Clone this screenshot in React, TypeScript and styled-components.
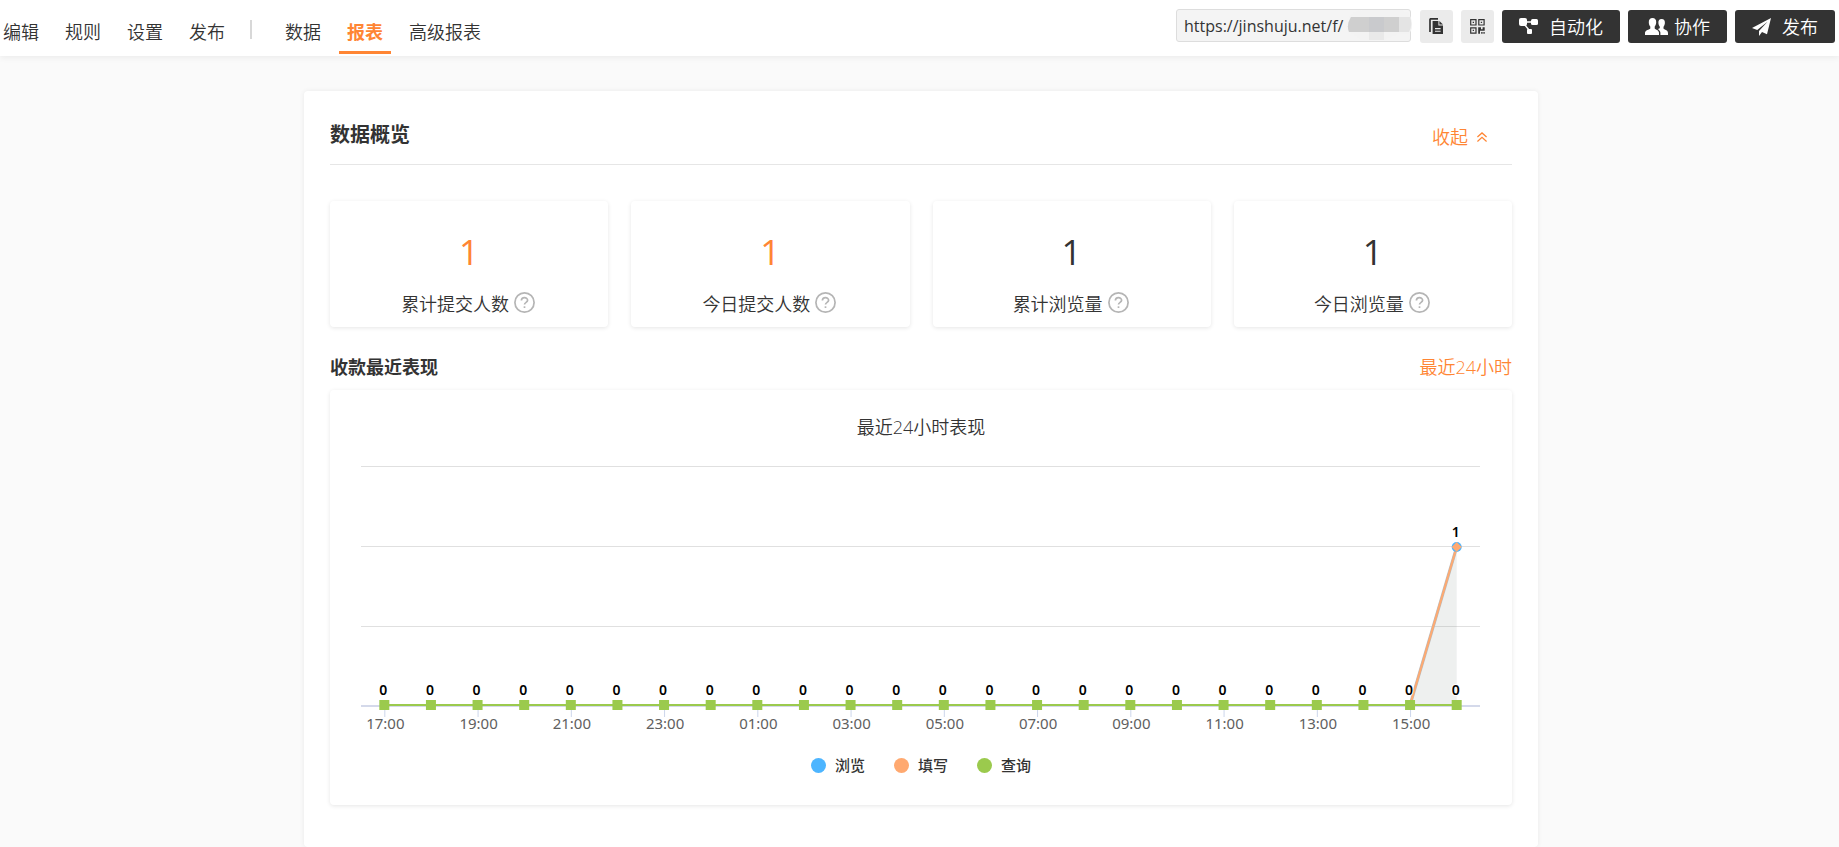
import React from "react";
import styled, { createGlobalStyle } from "styled-components";

const ORANGE = "#ff8533";
const CJK = `"Open Sans", "Noto Sans CJK SC", sans-serif`;

const GlobalStyle = createGlobalStyle`
  * { box-sizing: border-box; }
  body {
    margin: 0;
    background: #fafafa;
    color: #333;
    font-family: ${CJK};
    font-size: 18px;
    font-weight: 350;
    line-height: 24px;
  }
  #root { min-height: 100vh; display: flex; flex-direction: column; }
  button, input { font: inherit; color: inherit; }
  h1, h2, h3, p, ul { margin: 0; padding: 0; }
`;

const Header = styled.header`
  display: flex;
  justify-content: space-between;
  height: 56px;
  padding: 0 4px 0 3px;
  background: #fff;
  box-shadow: 0 2px 6px rgba(0, 0, 0, 0.06);
`;

const Nav = styled.nav`
  display: flex;
  gap: 10px;
  margin-left: -8px;
  padding-top: 12px;
`;

const NavLink = styled.a<{ $active?: boolean }>`
  height: 42px;
  padding: 8px 8px 0;
  color: ${(p) => (p.$active ? ORANGE : "#333")};
  font-weight: ${(p) => (p.$active ? 700 : 350)};
  border-bottom: 3px solid ${(p) => (p.$active ? ORANGE : "transparent")};
  text-decoration: none;
  white-space: nowrap;
`;

const Divider = styled.span`
  width: 2px;
  height: 19px;
  margin: 8px 15px 0 7px;
  background: #d8d8d8;
`;

const Tools = styled.div`
  display: flex;
  align-items: flex-start;
  gap: 8px;
  padding-top: 10px;
`;

const UrlBox = styled.div`
  position: relative;
  width: 235px;
  margin: -1px 1px 0 0;
`;

const UrlInput = styled.input`
  display: block;
  width: 100%;
  height: 33px;
  padding: 0 7px;
  border: 1px solid #ddd;
  border-radius: 3px;
  background: #f4f4f4;
  font-size: 16px;
  font-weight: 400;
`;

const Mask = styled.svg`
  position: absolute;
  top: 0;
  right: -2px;
`;

const IconButton = styled.button`
  display: flex;
  align-items: center;
  justify-content: center;
  width: 33px;
  height: 33px;
  padding: 0;
  border: 0;
  border-radius: 3px;
  background: #ebebeb;
`;

const DarkButton = styled.button<{ $gap: number }>`
  display: flex;
  align-items: center;
  gap: ${(p) => p.$gap}px;
  height: 33px;
  padding: 0 17px;
  border: 0;
  border-radius: 3px;
  background: #333;
  color: #fff;
  white-space: nowrap;
`;

const Main = styled.main`
  flex: 1;
  display: flex;
  justify-content: center;
  padding: 35px 0 0 3px;
`;

const Panel = styled.section`
  width: 100%;
  max-width: 1234px;
  padding: 0 26px 42px;
  border-radius: 4px;
  background: #fff;
  box-shadow: 0 0 5px rgba(0, 0, 0, 0.07);
`;

const PanelHead = styled.div`
  display: flex;
  justify-content: space-between;
  align-items: center;
  height: 74px;
  padding-top: 14px;
  border-bottom: 1px solid #e6e6e6;
`;

const PanelTitle = styled.h1`
  font-size: 20px;
  font-weight: 700;
`;

const TextButton = styled.button`
  display: flex;
  align-items: center;
  gap: 9px;
  padding: 0;
  border: 0;
  background: none;
  color: ${ORANGE};
`;

const Collapse = styled(TextButton)`
  margin-right: 25px;
  padding-top: 4px;
`;

const Cards = styled.div`
  display: grid;
  grid-template-columns: repeat(4, 1fr);
  gap: 23px;
  margin-top: 36px;
`;

const Card = styled.div`
  display: flex;
  flex-direction: column;
  align-items: center;
  height: 126px;
  padding-top: 31px;
  border-radius: 4px;
  background: #fff;
  box-shadow: 0 1px 4px rgba(0, 0, 0, 0.1);
`;

const CardValue = styled.strong<{ $accent?: boolean }>`
  color: ${(p) => (p.$accent ? ORANGE : "#333")};
  font-size: 35px;
  font-weight: 400;
  line-height: 40px;
`;

const CardLabel = styled.p`
  display: flex;
  align-items: flex-start;
  gap: 5px;
  margin-top: 20px;
  padding-right: 2px;
  white-space: nowrap;
`;

const SectionHead = styled.div`
  display: flex;
  justify-content: space-between;
  align-items: center;
  height: 63px;
  padding-top: 17px;
`;

const SectionTitle = styled.h2`
  font-size: 18px;
  font-weight: 700;
`;

const ChartBox = styled.div`
  padding: 25px 0 28px;
  border-radius: 4px;
  background: #fff;
  box-shadow: 0 1px 4px rgba(0, 0, 0, 0.1);
`;

const ChartTitle = styled.h3`
  font-size: 18px;
  font-weight: 350;
  text-align: center;
`;

const Plot = styled.svg`
  display: block;
  width: 100%;
  height: auto;
`;

const DataLabel = styled.text`
  fill: #000;
  stroke: #fff;
  stroke-width: 2px;
  paint-order: stroke;
  font: 600 14px "Noto Sans", sans-serif;
  text-anchor: middle;
`;

const AxisLabel = styled.text`
  fill: #606060;
  font: 400 15px "Noto Sans", sans-serif;
  text-anchor: middle;
`;

const Legend = styled.div`
  display: flex;
  justify-content: center;
  gap: 29px;
`;

const LegendItem = styled.button`
  display: flex;
  align-items: center;
  gap: 9px;
  padding: 0;
  border: 0;
  background: none;
  font-size: 15px;
  font-weight: 500;
  line-height: 24px;
`;

const Dot = styled.i<{ $color: string }>`
  width: 15px;
  height: 15px;
  border-radius: 50%;
  background: ${(p) => p.$color};
`;

const UrlMask = () => (
  <Mask width="66" height="33" viewBox="0 0 66 33" aria-hidden="true">
    <path d="M2 8Q8 0 18 1H54Q65 3 65 16Q65 24 60 25H52L37 31H15L4 24Z" fill="#f3f3f3" />
    <path d="M4 8H63Q66 16 62 23H2Q-1 16 4 8Z" fill="#e4e4e4" />
    <path d="M4 8H52V23H2Q-1 16 4 8Z" fill="#cfcfcf" />
    <path d="M22 8H37V23H22Z" fill="#c9cacd" />
    <path d="M22 23H37V31H22Z" fill="#e9e9e9" />
  </Mask>
);

const CopyIcon = () => (
  <svg width="15" height="17" viewBox="0 0 15 17">
    <path d="M1 14V1.6Q1 .8 1.8 .8H9" fill="none" stroke="#333" strokeWidth="1.7" />
    <path d="M3.6 3H9.4V7.6H14V16H3.6Z" fill="#333" />
    <path d="M10.4 3L14 6.6H10.4Z" fill="#333" />
    <path d="M6 10.6H11.6M6 13.2H11.6" stroke="#ebebeb" strokeWidth="1.1" />
  </svg>
);

const QrIcon = () => (
  <svg width="15" height="15" viewBox="0 0 15 15" fill="none" stroke="#333" strokeWidth="1.2">
    <path d="M.7 .7H6V6H.7ZM8.8 .7H14.1V6H8.8ZM.7 8.8H6V14.1H.7Z" />
    <path d="M2.7 2.7H4V4H2.7ZM10.8 2.7H12.1V4H10.8ZM2.7 10.8H4V12.1H2.7ZM8.2 8.2H11V10.2H12.6V8.2H14.7V11.8H10V14.7H8.2ZM11.2 13H12.6V14.7H11.2ZM13.4 13H14.7V14.7H13.4Z" fill="#333" stroke="none" />
  </svg>
);

const FlowIcon = () => (
  <svg width="19" height="17" viewBox="0 0 19 17" fill="#fff">
    <rect x="0" y="0" width="8" height="8" rx="2" />
    <rect x="12" y="1" width="7" height="6" rx="1.5" />
    <rect x="8" y="11" width="5" height="5" rx="1" />
    <path d="M6 4H13M5 6L10 12" stroke="#fff" strokeWidth="1.4" />
  </svg>
);

const PeopleIcon = () => (
  <svg width="23" height="17" viewBox="0 0 23 17" fill="#fff">
    <path d="M7.500 0C10 0 11.400 1.800 11.200 4.400C11.100 6.600 10.200 7.600 9.700 8.500V10.400C10.500 11.600 14 12 14 14.800V17H0V14.800C0 12 4.600 11.600 5.300 10.400V8.500C4.600 7.600 3.900 6.600 3.800 4.400C3.700 1.800 5 0 7.500 0Z" />
    <path d="M16.600 1C18.900 1 20 2.600 19.900 5C19.800 7 19 8 18.500 8.800V10.600C19.200 11.800 23 12 23 15V17H15.400V14.600C15.300 12.700 13.800 11.600 12.600 10.900C14.400 10.900 14.900 10.400 14.900 8.800C14.300 8 13.500 7 13.400 5C13.300 2.600 14.300 1 16.600 1Z" />
  </svg>
);

const PlaneIcon = () => (
  <svg width="19" height="18" viewBox="0 0 19 18" fill="#fff">
    <path d="M19 0L0 10L5.200 12L15.500 3.800L7 13V18L10 14L15 16.200Z" />
  </svg>
);

const UpIcon = () => (
  <svg width="10" height="10" viewBox="0 0 10 10" fill="none" stroke="currentColor" strokeWidth="1.3">
    <path d="M.4 5L5 .9L9.600 5M.4 9.400L5 5.300L9.600 9.400" />
  </svg>
);

const HelpIcon = () => (
  <svg width="21" height="21" viewBox="0 0 21 21" fill="none" stroke="#b5b5b5" strokeWidth="1.7">
    <circle cx="10.500" cy="10.500" r="9.600" />
    <path d="M7.400 8.600C7.400 4.800 13.600 4.800 13.600 8.300C13.600 10.400 10.500 10.300 10.500 12.600" />
    <path d="M10.500 14.300V16" />
  </svg>
);

const cards = [
  { label: "累计提交人数", value: 1, accent: true },
  { label: "今日提交人数", value: 1, accent: true },
  { label: "累计浏览量", value: 1 },
  { label: "今日浏览量", value: 1 },
];

const series = [
  { name: "浏览", color: "#4db5ff" },
  { name: "填写", color: "#ffa970" },
  { name: "查询", color: "#9bca4d" },
];

const hours = Array.from({ length: 24 }, (_, i) => (17 + i) % 24);
const LEFT = 31;
const RIGHT = 1150;
const BASE = 266;
const PEAK = 108;
const STEP = (RIGHT - LEFT) / hours.length;
const pointX = (i: number) => LEFT + STEP * (i + 0.5);

const Chart = () => {
  const last = pointX(23);
  const previous = pointX(22);
  return (
    <Plot viewBox="0 0 1182 314" role="img" aria-label="最近24小时表现">
      {[27.5, 107.5, 187.5].map((y) => (
        <path key={y} d={`M${LEFT} ${y}H${RIGHT}`} stroke="#e0e0e0" />
      ))}
      <path d={`M${LEFT} ${BASE + 1}H${RIGHT}`} stroke="#d4d9ea" strokeWidth="2" />
      {hours.map((h, i) =>
        i % 2 === 0 ? (
          <path key={h} d={`M${pointX(i) + 0.5} ${BASE}V${BASE + 12}`} stroke="#ccd6eb" />
        ) : null
      )}
      <path d={`M${previous} ${BASE}L${last} ${PEAK}V${BASE}Z`} fill="#8c9a96" fillOpacity="0.15" />
      <path d={`M${previous} ${BASE}L${last} ${PEAK}`} stroke="#b9b9b9" strokeWidth="3" />
      <path d={`M${previous} ${BASE}L${last} ${PEAK}`} stroke="#ffa970" strokeWidth="2" />
      <path d={`M${pointX(0)} ${BASE}H${last}`} stroke="#9bca4d" strokeWidth="2" />
      <circle cx={last} cy={PEAK} r="5" fill="#4db5ff" />
      <path d={`M${last} ${PEAK - 5}l5 5l-5 5l-5 -5Z`} fill="#ffa970" />
      {hours.map((h, i) => (
        <g key={h}>
          <rect x={pointX(i) - 5} y={BASE - 5} width="10" height="10" fill="#9bca4d" />
          <DataLabel x={pointX(i) - 1} y={BASE - 10}>0</DataLabel>
          {i % 2 === 0 && (
            <AxisLabel x={pointX(i) + 1} y={BASE + 24}>{String(h).padStart(2, "0")}:00</AxisLabel>
          )}
        </g>
      ))}
      <DataLabel x={last - 1} y={PEAK - 10}>1</DataLabel>
    </Plot>
  );
};

export default function App() {
  return (
    <>
      <GlobalStyle />
      <Header>
        <Nav>
          <NavLink href="#edit">编辑</NavLink>
          <NavLink href="#rules">规则</NavLink>
          <NavLink href="#settings">设置</NavLink>
          <NavLink href="#publish">发布</NavLink>
          <Divider />
          <NavLink href="#data">数据</NavLink>
          <NavLink href="#report" $active aria-current="page">报表</NavLink>
          <NavLink href="#advanced">高级报表</NavLink>
        </Nav>
        <Tools>
          <UrlBox>
            <UrlInput aria-label="表单链接" readOnly value="https://jinshuju.net/f/" />
            <UrlMask />
          </UrlBox>
          <IconButton aria-label="复制链接"><CopyIcon /></IconButton>
          <IconButton aria-label="二维码"><QrIcon /></IconButton>
          <DarkButton $gap={11}><FlowIcon />自动化</DarkButton>
          <DarkButton $gap={6}><PeopleIcon />协作</DarkButton>
          <DarkButton $gap={11}><PlaneIcon />发布</DarkButton>
        </Tools>
      </Header>
      <Main>
        <Panel>
          <PanelHead>
            <PanelTitle>数据概览</PanelTitle>
            <Collapse>收起<UpIcon /></Collapse>
          </PanelHead>
          <Cards>
            {cards.map((c) => (
              <Card key={c.label}>
                <CardValue $accent={c.accent}>{c.value}</CardValue>
                <CardLabel>{c.label}<HelpIcon /></CardLabel>
              </Card>
            ))}
          </Cards>
          <SectionHead>
            <SectionTitle>收款最近表现</SectionTitle>
            <TextButton>最近24小时</TextButton>
          </SectionHead>
          <ChartBox>
            <ChartTitle>最近24小时表现</ChartTitle>
            <Chart />
            <Legend>
              {series.map((s) => (
                <LegendItem key={s.name}><Dot $color={s.color} />{s.name}</LegendItem>
              ))}
            </Legend>
          </ChartBox>
        </Panel>
      </Main>
    </>
  );
}
